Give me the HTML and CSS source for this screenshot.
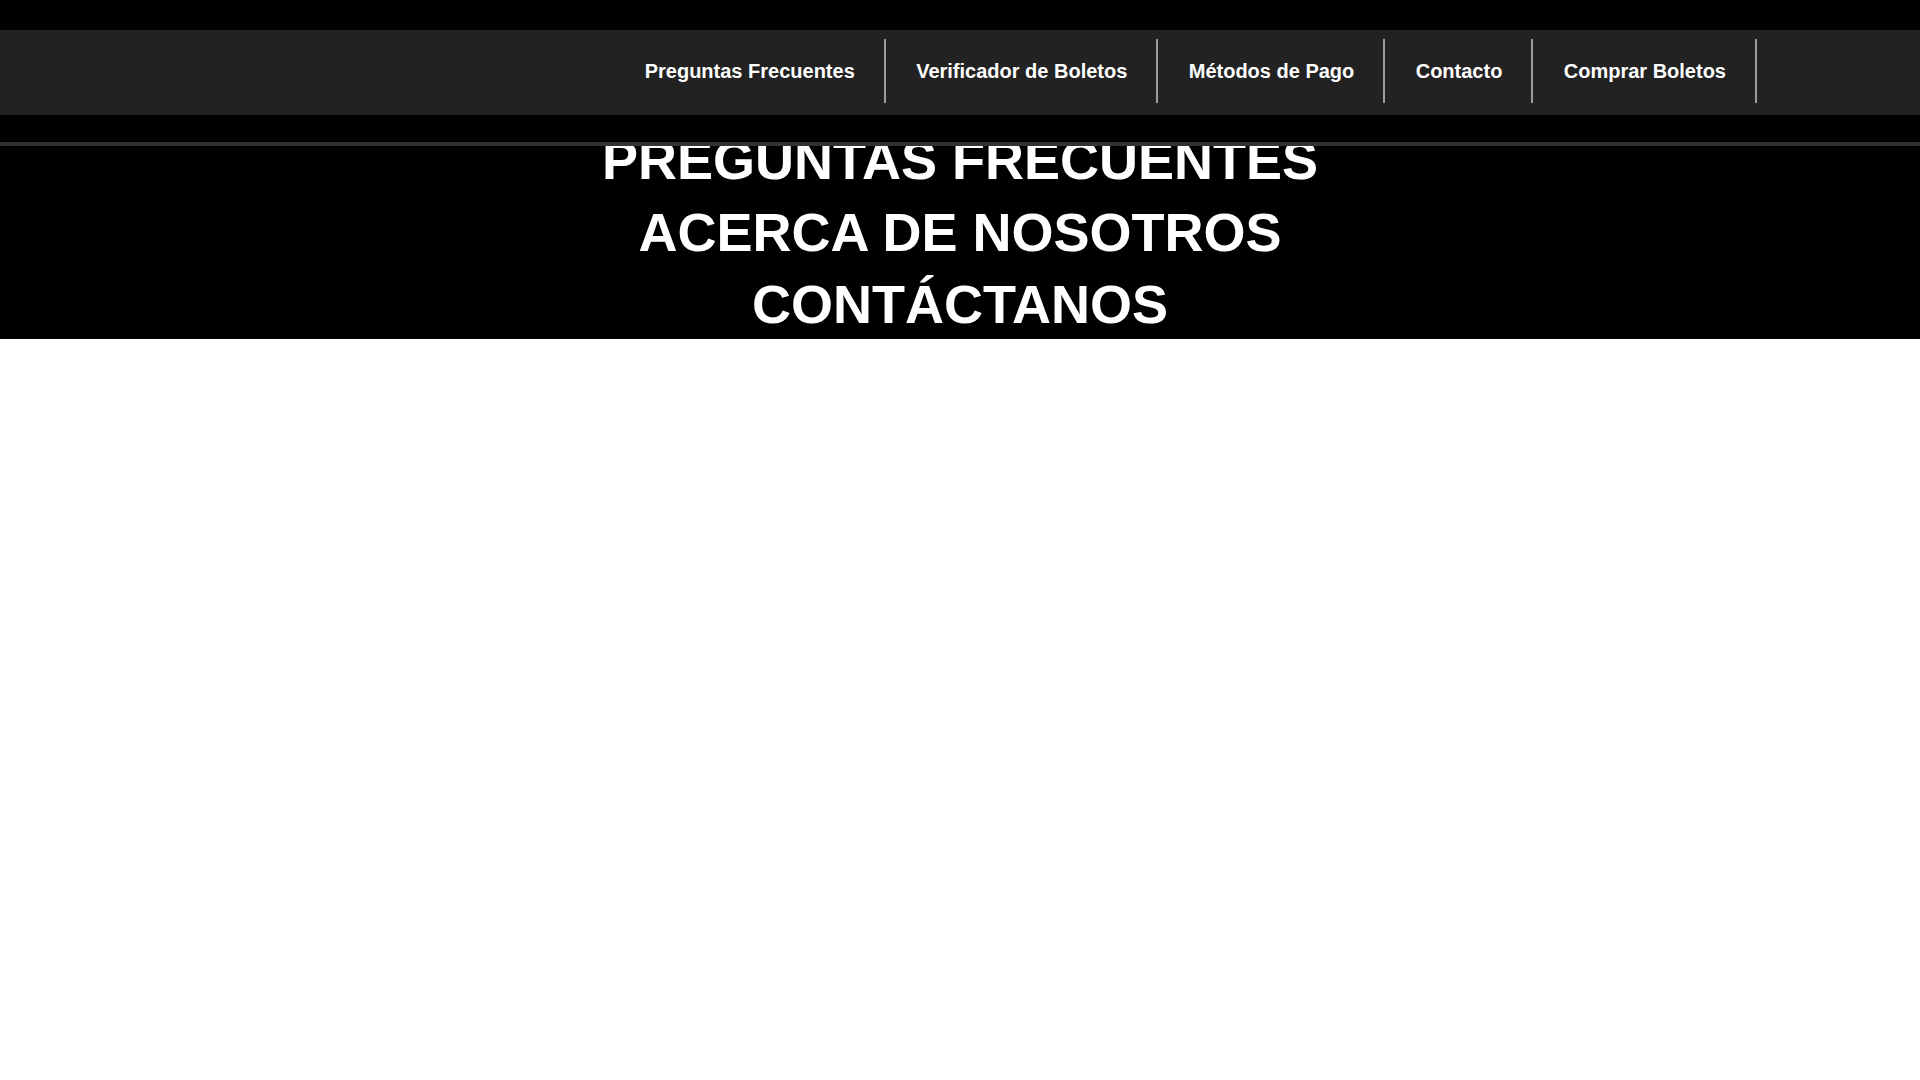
FILE: index.html
```html
<!DOCTYPE html>
<html lang="es">
<head>
<meta charset="utf-8">
<title>Preguntas Frecuentes</title>
<link rel="stylesheet" href="styles.css">
</head>
<body>
<div class="topbar"></div>
<nav class="mainnav">
  <ul class="menu">
    <li class="menu-item"><a href="#">Preguntas Frecuentes</a></li>
    <li class="menu-item"><a href="#">Verificador de Boletos</a></li>
    <li class="menu-item"><a href="#">Métodos de Pago</a></li>
    <li class="menu-item"><a href="#">Contacto</a></li>
    <li class="menu-item"><a href="#">Comprar Boletos</a></li>
  </ul>
</nav>
<div class="gap"></div>
<section class="hero">
  <ul class="hero-list">
    <li>PREGUNTAS FRECUENTES</li>
    <li>ACERCA DE NOSOTROS</li>
    <li>CONTÁCTANOS</li>
  </ul>
</section>
</body>
</html>
```
FILE: styles.css
```css
html, body {
  margin: 0;
  padding: 0;
  background: #ffffff;
  font-family: "Liberation Sans", Arial, sans-serif;
}

.topbar {
  height: 30px;
  background: #000000;
}

.mainnav {
  height: 85px;
  background: #222222;
  display: flex;
  justify-content: flex-end;
  align-items: flex-start;
  padding-right: 163px;
  box-sizing: border-box;
}

.menu {
  list-style: none;
  margin: 9px 0 0 0;
  padding: 0;
  display: flex;
}

.menu-item {
  height: 64px;
  padding: 0 29px 0 30.4px;
  border-right: 2px solid #9d9d9d;
  display: flex;
  align-items: center;
}

.menu-item:first-child {
  padding-left: 0;
}

.menu-item a {
  color: #ffffff;
  text-decoration: none;
  font-weight: bold;
  font-size: 20px;
  line-height: 24px;
  margin-top: -1px;
}

.gap {
  height: 27px;
  background: #000000;
}

.hero {
  background: #000000;
  border-top: 4px solid #323232;
  height: 193px;
  overflow: hidden;
}

.hero-list {
  list-style: none;
  margin: -22px 0 0 0;
  padding: 0;
  text-align: center;
  color: #ffffff;
  font-weight: bold;
  font-size: 54px;
  line-height: 72px;
}
```
